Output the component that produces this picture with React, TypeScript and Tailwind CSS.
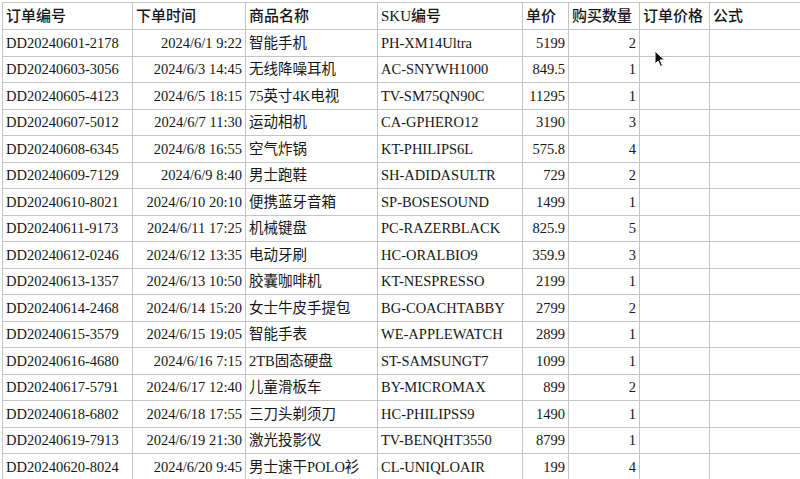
type Order = [string, string, string, string, string, string];

const HEAD = ['订单编号', '下单时间', '商品名称', 'SKU编号', '单价', '购买数量', '订单价格', '公式'];
const WIDTHS = ['w-[130px]', 'w-[113px]', 'w-[132px]', 'w-[145px]', 'w-[46px]', 'w-[71px]', 'w-[70px]', 'w-[120px]'];

const ROWS: Order[] = [
  ['DD20240601-2178', '2024/6/1 9:22', '智能手机', 'PH-XM14Ultra', '5199', '2'],
  ['DD20240603-3056', '2024/6/3 14:45', '无线降噪耳机', 'AC-SNYWH1000', '849.5', '1'],
  ['DD20240605-4123', '2024/6/5 18:15', '75英寸4K电视', 'TV-SM75QN90C', '11295', '1'],
  ['DD20240607-5012', '2024/6/7 11:30', '运动相机', 'CA-GPHERO12', '3190', '3'],
  ['DD20240608-6345', '2024/6/8 16:55', '空气炸锅', 'KT-PHILIPS6L', '575.8', '4'],
  ['DD20240609-7129', '2024/6/9 8:40', '男士跑鞋', 'SH-ADIDASULTR', '729', '2'],
  ['DD20240610-8021', '2024/6/10 20:10', '便携蓝牙音箱', 'SP-BOSESOUND', '1499', '1'],
  ['DD20240611-9173', '2024/6/11 17:25', '机械键盘', 'PC-RAZERBLACK', '825.9', '5'],
  ['DD20240612-0246', '2024/6/12 13:35', '电动牙刷', 'HC-ORALBIO9', '359.9', '3'],
  ['DD20240613-1357', '2024/6/13 10:50', '胶囊咖啡机', 'KT-NESPRESSO', '2199', '1'],
  ['DD20240614-2468', '2024/6/14 15:20', '女士牛皮手提包', 'BG-COACHTABBY', '2799', '2'],
  ['DD20240615-3579', '2024/6/15 19:05', '智能手表', 'WE-APPLEWATCH', '2899', '1'],
  ['DD20240616-4680', '2024/6/16 7:15', '2TB固态硬盘', 'ST-SAMSUNGT7', '1099', '1'],
  ['DD20240617-5791', '2024/6/17 12:40', '儿童滑板车', 'BY-MICROMAX', '899', '2'],
  ['DD20240618-6802', '2024/6/18 17:55', '三刀头剃须刀', 'HC-PHILIPSS9', '1490', '1'],
  ['DD20240619-7913', '2024/6/19 21:30', '激光投影仪', 'TV-BENQHT3550', '8799', '1'],
  ['DD20240620-8024', '2024/6/20 9:45', '男士速干POLO衫', 'CL-UNIQLOAIR', '199', '4'],
];

// right-aligned columns: time, price, qty
const RIGHT = [false, true, false, false, true, true, false, false];

export default function App() {
  return (
    <div className="relative w-[800px] h-[479px] overflow-hidden bg-white pl-[2px] pt-[2px] text-[#161616] font-['Liberation_Serif','Noto_Sans_CJK_SC',serif] text-[14.5px]">
      <table className="border-collapse table-fixed w-[827px] min-w-[827px]">
        <colgroup>
          {WIDTHS.map((w, i) => <col key={i} className={w} />)}
        </colgroup>
        <thead>
          <tr className="h-[27px]">
            {HEAD.map((h, i) => (
              <th key={i} className={`${WIDTHS[i]} border border-[#c4c4c4] px-[3px] text-left font-medium text-[15px] whitespace-nowrap leading-none`}>
                {h}
              </th>
            ))}
          </tr>
        </thead>
        <tbody>
          {ROWS.map((r, ri) => (
            <tr key={ri} className="h-[26.5px]">
              {[...r, '', ''].map((c, ci) => (
                <td
                  key={ci}
                  className={`border border-[#c4c4c4] px-[3px] whitespace-nowrap leading-none ${RIGHT[ci] ? 'text-right' : 'text-left'}`}
                >
                  {c}
                </td>
              ))}
            </tr>
          ))}
        </tbody>
      </table>

      {/* mouse pointer */}
      <svg className="absolute left-[654px] top-[50px]" width="12" height="18" viewBox="0 0 12 18">
        <path d="M1 1 L1 14 L4 11 L6.5 16.5 L8.5 15.5 L6 10 L10.5 10 Z" fill="#111" stroke="#fff" strokeWidth="1" />
      </svg>
    </div>
  );
}
